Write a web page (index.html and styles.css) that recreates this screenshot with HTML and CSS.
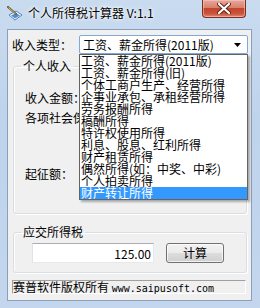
FILE: index.html
```html
<!DOCTYPE html>
<html lang="zh-CN">
<head>
	<meta charset="UTF-8">
	<meta name="viewport" content="width=device-width, initial-scale=1.0">
	<title>个人所得税计算器 V:1.1</title>
	<link rel="stylesheet" href="styles.css">
</head>

<body>
	<div class="window">
		<div class="titlebar">
			<svg class="app-icon" width="17" height="16" viewBox="0 0 17 16">
				<path d="M2 9 L9 5 L15 9 L8 14 Z" fill="#ffffff" stroke="#5a7fb8" stroke-width="1"/>
				<path d="M4 9.5 L9 7 L13 9.5 L8 12.5 Z" fill="#4f8fd9"/>
				<path d="M1 1 L9 8" stroke="#6b5a3a" stroke-width="2.2" stroke-linecap="round"/>
				<path d="M1.5 1.5 L8.5 7.8" stroke="#d8c27a" stroke-width="0.9"/>
			</svg>
			<span class="title">个人所得税计算器 V:1.1</span>
			<button class="close" title="关闭">
				<svg width="14" height="11" viewBox="0 0 14 11">
					<path d="M2 1 L12 10 M12 1 L2 10" stroke="#5b2016" stroke-width="4" stroke-linecap="round"/>
					<path d="M2 1 L12 10 M12 1 L2 10" stroke="#ffffff" stroke-width="2.2" stroke-linecap="round"/>
				</svg>
			</button>
		</div>

		<div class="client">
			<div class="type-row">
				<label class="label">收入类型：</label>
				<div class="combo">
					<div class="combo-box">
						<span>工资、薪金所得(2011版)</span>
						<svg class="arrow" width="7" height="4" viewBox="0 0 7 4"><path d="M0 0 H7 L3.5 4 Z" fill="#000"/></svg>
					</div>
					<ul class="combo-list">
						<li>工资、薪金所得(2011版)</li>
						<li>工资、薪金所得(旧)</li>
						<li>个体工商户生产、经营所得</li>
						<li>企事业承包、承租经营所得</li>
						<li>劳务报酬所得</li>
						<li>稿酬所得</li>
						<li>特许权使用所得</li>
						<li>利息、股息、红利所得</li>
						<li>财产租赁所得</li>
						<li>偶然所得(如：中奖、中彩)</li>
						<li>个人拍卖所得</li>
						<li class="selected">财产转让所得</li>
					</ul>
				</div>
			</div>

			<fieldset class="group income">
				<legend>个人收入</legend>
				<div class="field first"><label>收入金额：</label><input type="text"></div>
				<div class="field"><label>各项社会保险费：</label><input type="text"></div>
				<div class="field threshold"><label>起征额：</label><input type="text"></div>
			</fieldset>

			<fieldset class="group tax">
				<legend>应交所得税</legend>
				<div class="result-row">
					<input class="result" type="text" value="125.00" readonly>
					<button class="calc">计算</button>
				</div>
			</fieldset>

			<div class="status">赛普软件版权所有 <span class="url">www.saipusoft.com</span></div>
		</div>
	</div>
</body>

</html>
```

FILE: styles.css
```css
html,
body {
	margin: 0;
	padding: 0;
}

*,
*::after,
*::before {
	box-sizing: border-box;
}

body, input, button, label, legend {
	font-family: "Noto Sans CJK SC", sans-serif;
	font-size: 12px;
	color: #000;
}

.window {
	width: 260px;
	height: 308px;
	display: flex;
	flex-direction: column;
	background: linear-gradient(#c9dbef, #bed3ec 40%, #c3d6ee);
}

/* title bar */
.titlebar {
	height: 29px;
	display: flex;
	align-items: flex-start;
}

.app-icon {
	margin: 6px 0 0 7px;
}

.title {
	margin: 5px 0 0 4px;
	line-height: 16px;
	font-size: 12px;
	text-shadow: 0 0 5px #fff, 0 0 3px #fff;
}

.close {
	margin: 0 14px 0 auto;
	width: 44px;
	height: 18px;
	padding: 0;
	border: 1px solid #7e2d20;
	border-top: none;
	border-radius: 0 0 4px 4px;
	background: linear-gradient(#e5a79c, #d9806f 45%, #c4442c 50%, #c9553c 80%, #da8a70);
	box-shadow: inset 0 0 0 1px rgba(255, 210, 200, 0.5);
	display: flex;
	align-items: center;
	justify-content: center;
}

/* client area */
.client {
	flex: 1;
	margin: 0 8px 7px 7px;
	border: 1px solid #8a9fba;
	background: #f0f0f0;
	display: flex;
	flex-direction: column;
}

.type-row {
	display: flex;
	align-items: center;
	height: 19px;
	margin-top: 5px;
	padding-left: 4px;
}

.type-row .label {
	width: 67px;
	line-height: 12px;
}

.combo {
	position: relative;
	width: 169px;
	height: 19px;
}

.combo-box {
	height: 19px;
	display: flex;
	align-items: center;
	padding: 0 6px 0 3px;
	background: #fff;
	border: 1px solid #7fa9d8;
	border-radius: 2px;
	line-height: 12px;
}

.combo-box .arrow {
	margin-left: auto;
}

.combo-list {
	position: absolute;
	top: 19px;
	left: 0;
	width: 169px;
	margin: 0;
	padding: 0;
	list-style: none;
	background: #fff;
	border: 1px solid #646464;
	box-shadow: 2px 2px 2px rgba(0, 0, 0, 0.3);
	z-index: 5;
}

.combo-list li {
	height: 12px;
	line-height: 12px;
	padding-left: 1px;
	white-space: nowrap;
}

.combo-list li.selected {
	background: #3399ff;
	color: #fff;
}

/* group boxes */
.group {
	width: 234px;
	margin: 0 0 0 5px;
	padding: 0;
	border: 1px solid #d5dfe5;
	border-radius: 3px;
	box-shadow: inset 1px 1px 0 #fff, 1px 1px 0 #fff;
}

.group legend {
	margin-left: 7px;
	padding: 0 2px;
	line-height: 12px;
}

.income {
	margin-top: 6px;
	padding-bottom: 30px;
}

.field {
	height: 18px;
	margin: 2px 0 0 11px;
	display: flex;
	align-items: center;
	line-height: 12px;
}

.field.first {
	margin-top: 17px;
}

.field.threshold {
	margin-top: 38px;
}

.field input {
	margin-left: auto;
	margin-right: 10px;
	width: 95px;
	height: 18px;
}

input {
	border: 1px solid #abadb3;
	border-color: #abadb3 #e3e9ef #e3e9ef #e2e3ea;
	background: #fff;
	padding: 0 2px;
	outline: none;
}

.tax {
	margin-top: 12px;
	padding-bottom: 9px;
}

.result-row {
	display: flex;
	gap: 12px;
	margin: 5px 0 0 18px;
}

.result {
	width: 122px;
	height: 20px;
	text-align: right;
	line-height: 12px;
}

.calc {
	width: 58px;
	height: 20px;
	padding: 0;
	border: 1px solid #707070;
	border-radius: 3px;
	background: linear-gradient(#f2f2f2, #ebebeb 50%, #dddddd 51%, #cfcfcf);
	box-shadow: inset 0 0 0 1px rgba(255, 255, 255, 0.7);
	line-height: 12px;
	cursor: pointer;
}

/* status bar */
.status {
	width: 234px;
	height: 14px;
	margin: 7px 0 0 4px;
	border: 1px solid;
	border-color: #a0a0a0 #ffffff #ffffff #a0a0a0;
	line-height: 12px;
	white-space: nowrap;
}

.status .url {
	font-family: "DejaVu Sans Mono", monospace;
	font-size: 10px;
}
```
